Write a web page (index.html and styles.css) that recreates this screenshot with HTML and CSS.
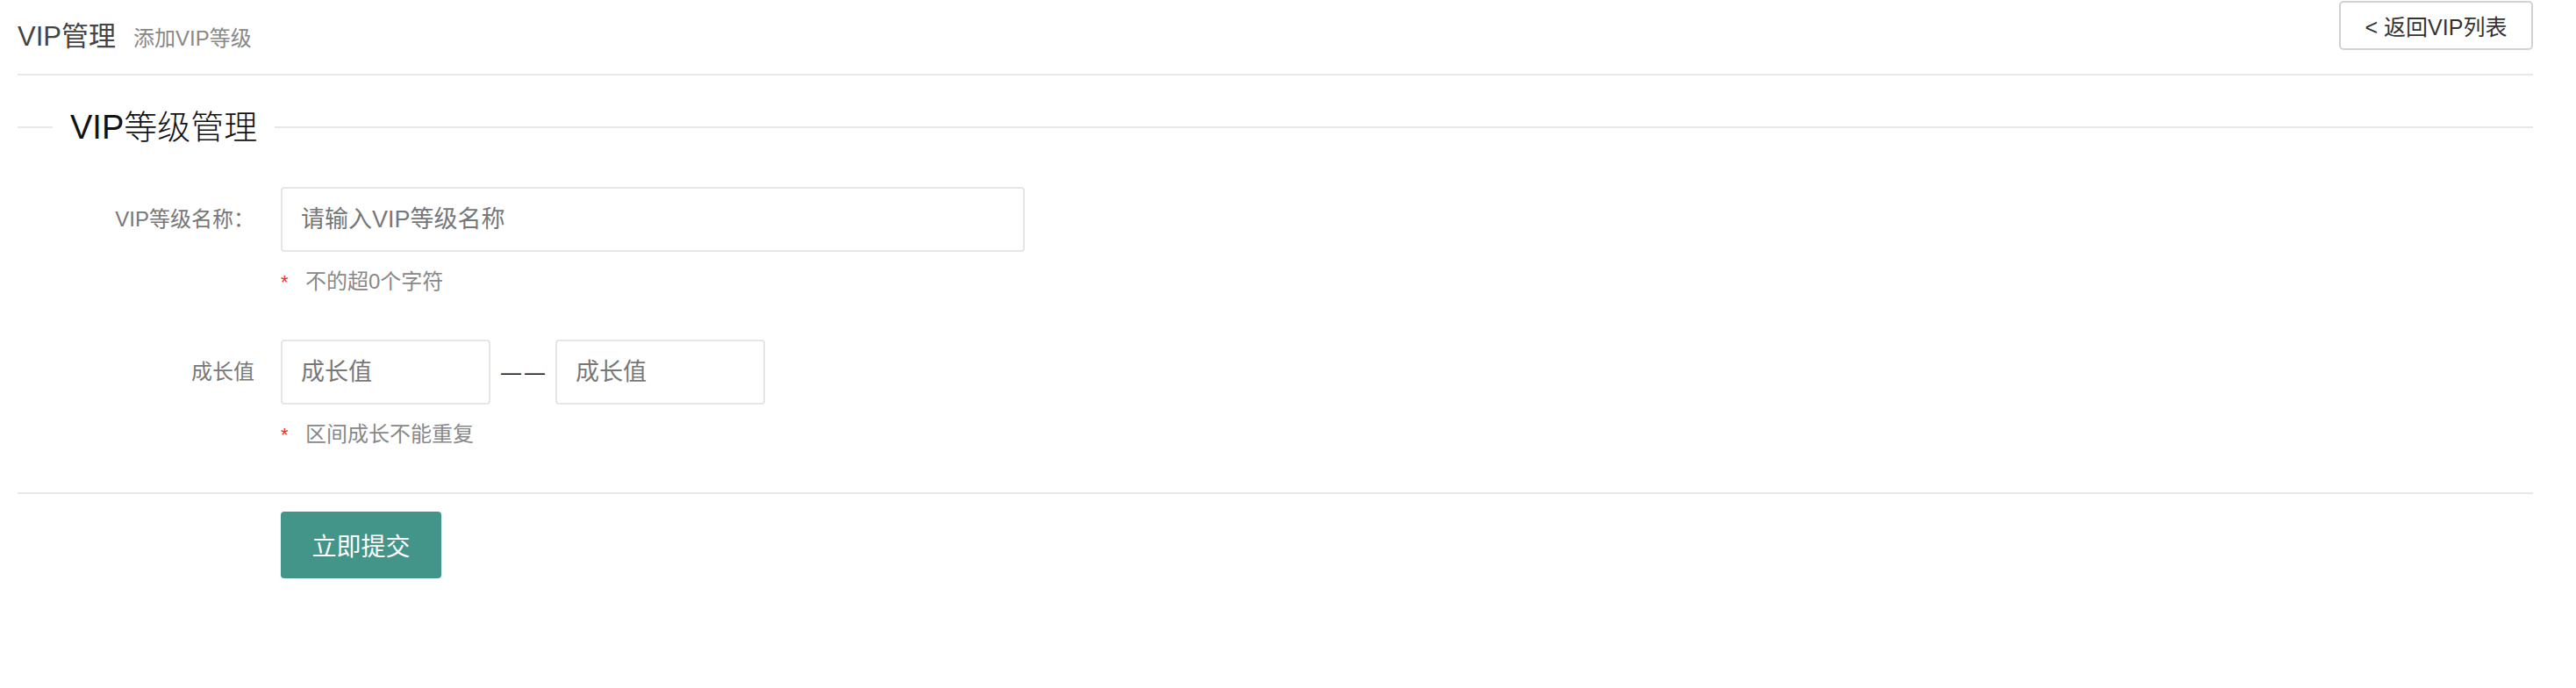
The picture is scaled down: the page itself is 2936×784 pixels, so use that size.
FILE: index.html
```html
<!DOCTYPE html>
<html lang="zh-CN">
<head>
  <meta charset="UTF-8">
  <meta name="viewport" content="width=device-width, initial-scale=1.0">
  <title>添加VIP等级</title>
  <link rel="stylesheet" href="styles.css">
</head>
<body>

<div class="page">
  <div class="page-header">
    <div class="page-title">
      <span class="title">VIP管理</span>
      <span class="subtitle">添加VIP等级</span>
    </div>
    <button type="button" class="btn-back">&lt; 返回VIP列表</button>
  </div>

  <div class="legend">VIP等级管理</div>

  <form class="vip-form">
    <div class="form-item">
      <label class="form-label" for="levelName">VIP等级名称：</label>
      <div class="form-block">
        <input type="text" id="levelName" class="form-input input-long" placeholder="请输入VIP等级名称">
        <div class="form-tip"><span class="star">*</span>不的超0个字符</div>
      </div>
    </div>

    <div class="form-item item-growth">
      <label class="form-label" for="growthMin">成长值</label>
      <div class="form-block">
        <div class="range">
          <input type="text" id="growthMin" class="form-input input-short" placeholder="成长值">
          <span class="range-sep">——</span>
          <input type="text" id="growthMax" class="form-input input-short" placeholder="成长值">
        </div>
        <div class="form-tip"><span class="star">*</span>区间成长不能重复</div>
      </div>
    </div>

    <!-- 提交 -->
    <div class="form-footer">
      <button type="button" class="btn-submit">立即提交</button>
    </div>
  </form>
</div>

</body>
</html>
```

FILE: styles.css
```css
body {
  margin: 0;
  padding: 0;
  background-color: #fff;
  font-family: "Liberation Sans", "Noto Sans CJK SC", sans-serif;
  color: #333;
}

.page {
  padding: 0 49px 0 20px;
}

.page-header {
  display: flex;
  justify-content: space-between;
  align-items: flex-start;
  height: 84px;
  border-bottom: 2px solid #e8e8e8;
}

.page-title {
  display: flex;
  align-items: baseline;
  padding-top: 22px;
}

.page-title .title {
  font-size: 31px;
  line-height: 40px;
  color: #444;
}

.page-title .subtitle {
  margin-left: 20px;
  font-size: 24px;
  color: #888;
}

.btn-back {
  margin-top: 1px;
  height: 56px;
  width: 221px;
  padding: 0;
  background-color: #fff;
  border: 2px solid #d2d2d2;
  border-radius: 5px;
  font-family: inherit;
  font-size: 25px;
  color: #333;
  cursor: pointer;
}

.legend {
  display: flex;
  align-items: center;
  margin-top: 39px;
  font-size: 38px;
  line-height: 40px;
  font-weight: 300;
  color: #111;
}

.legend::before {
  content: "";
  width: 40px;
  height: 2px;
  margin-right: 20px;
  background-color: #e8e8e8;
}

.legend::after {
  content: "";
  flex: 1;
  height: 2px;
  margin-left: 20px;
  background-color: #e8e8e8;
}

.vip-form {
  margin-top: 48px;
}

.form-item {
  display: flex;
  align-items: flex-start;
}

.item-growth {
  margin-top: 50px;
}

.form-label {
  width: 270px;
  padding-right: 30px;
  text-align: right;
  font-size: 24px;
  line-height: 74px;
  color: #777;
}

.form-input {
  box-sizing: border-box;
  height: 74px;
  padding: 0 0 0 21px;
  border: 2px solid #e6e6e6;
  border-radius: 4px;
  font-family: inherit;
  font-size: 27px;
  color: #333;
  outline: none;
}

.form-input::placeholder {
  color: #777;
}

.input-long {
  width: 848px;
}

.input-short {
  width: 239px;
}

.range {
  display: flex;
  align-items: center;
}

.range-sep {
  width: 74px;
  text-align: center;
  font-size: 23px;
  letter-spacing: 4px;
  text-indent: 4px;
  color: #111;
}

.form-tip {
  margin-top: 19px;
  font-size: 24px;
  line-height: 30px;
  color: #888;
}

.form-tip .star {
  display: inline-block;
  width: 28px;
  color: #ff2a1a;
  font-size: 22px;
}

.form-footer {
  margin-top: 50px;
  padding: 20px 0 0 300px;
  border-top: 2px solid #e8e8e8;
}

.btn-submit {
  width: 183px;
  height: 76px;
  padding: 0;
  border: none;
  border-radius: 4px;
  background-color: #43958a;
  color: #fff;
  font-family: inherit;
  font-size: 28px;
  cursor: pointer;
}
```
